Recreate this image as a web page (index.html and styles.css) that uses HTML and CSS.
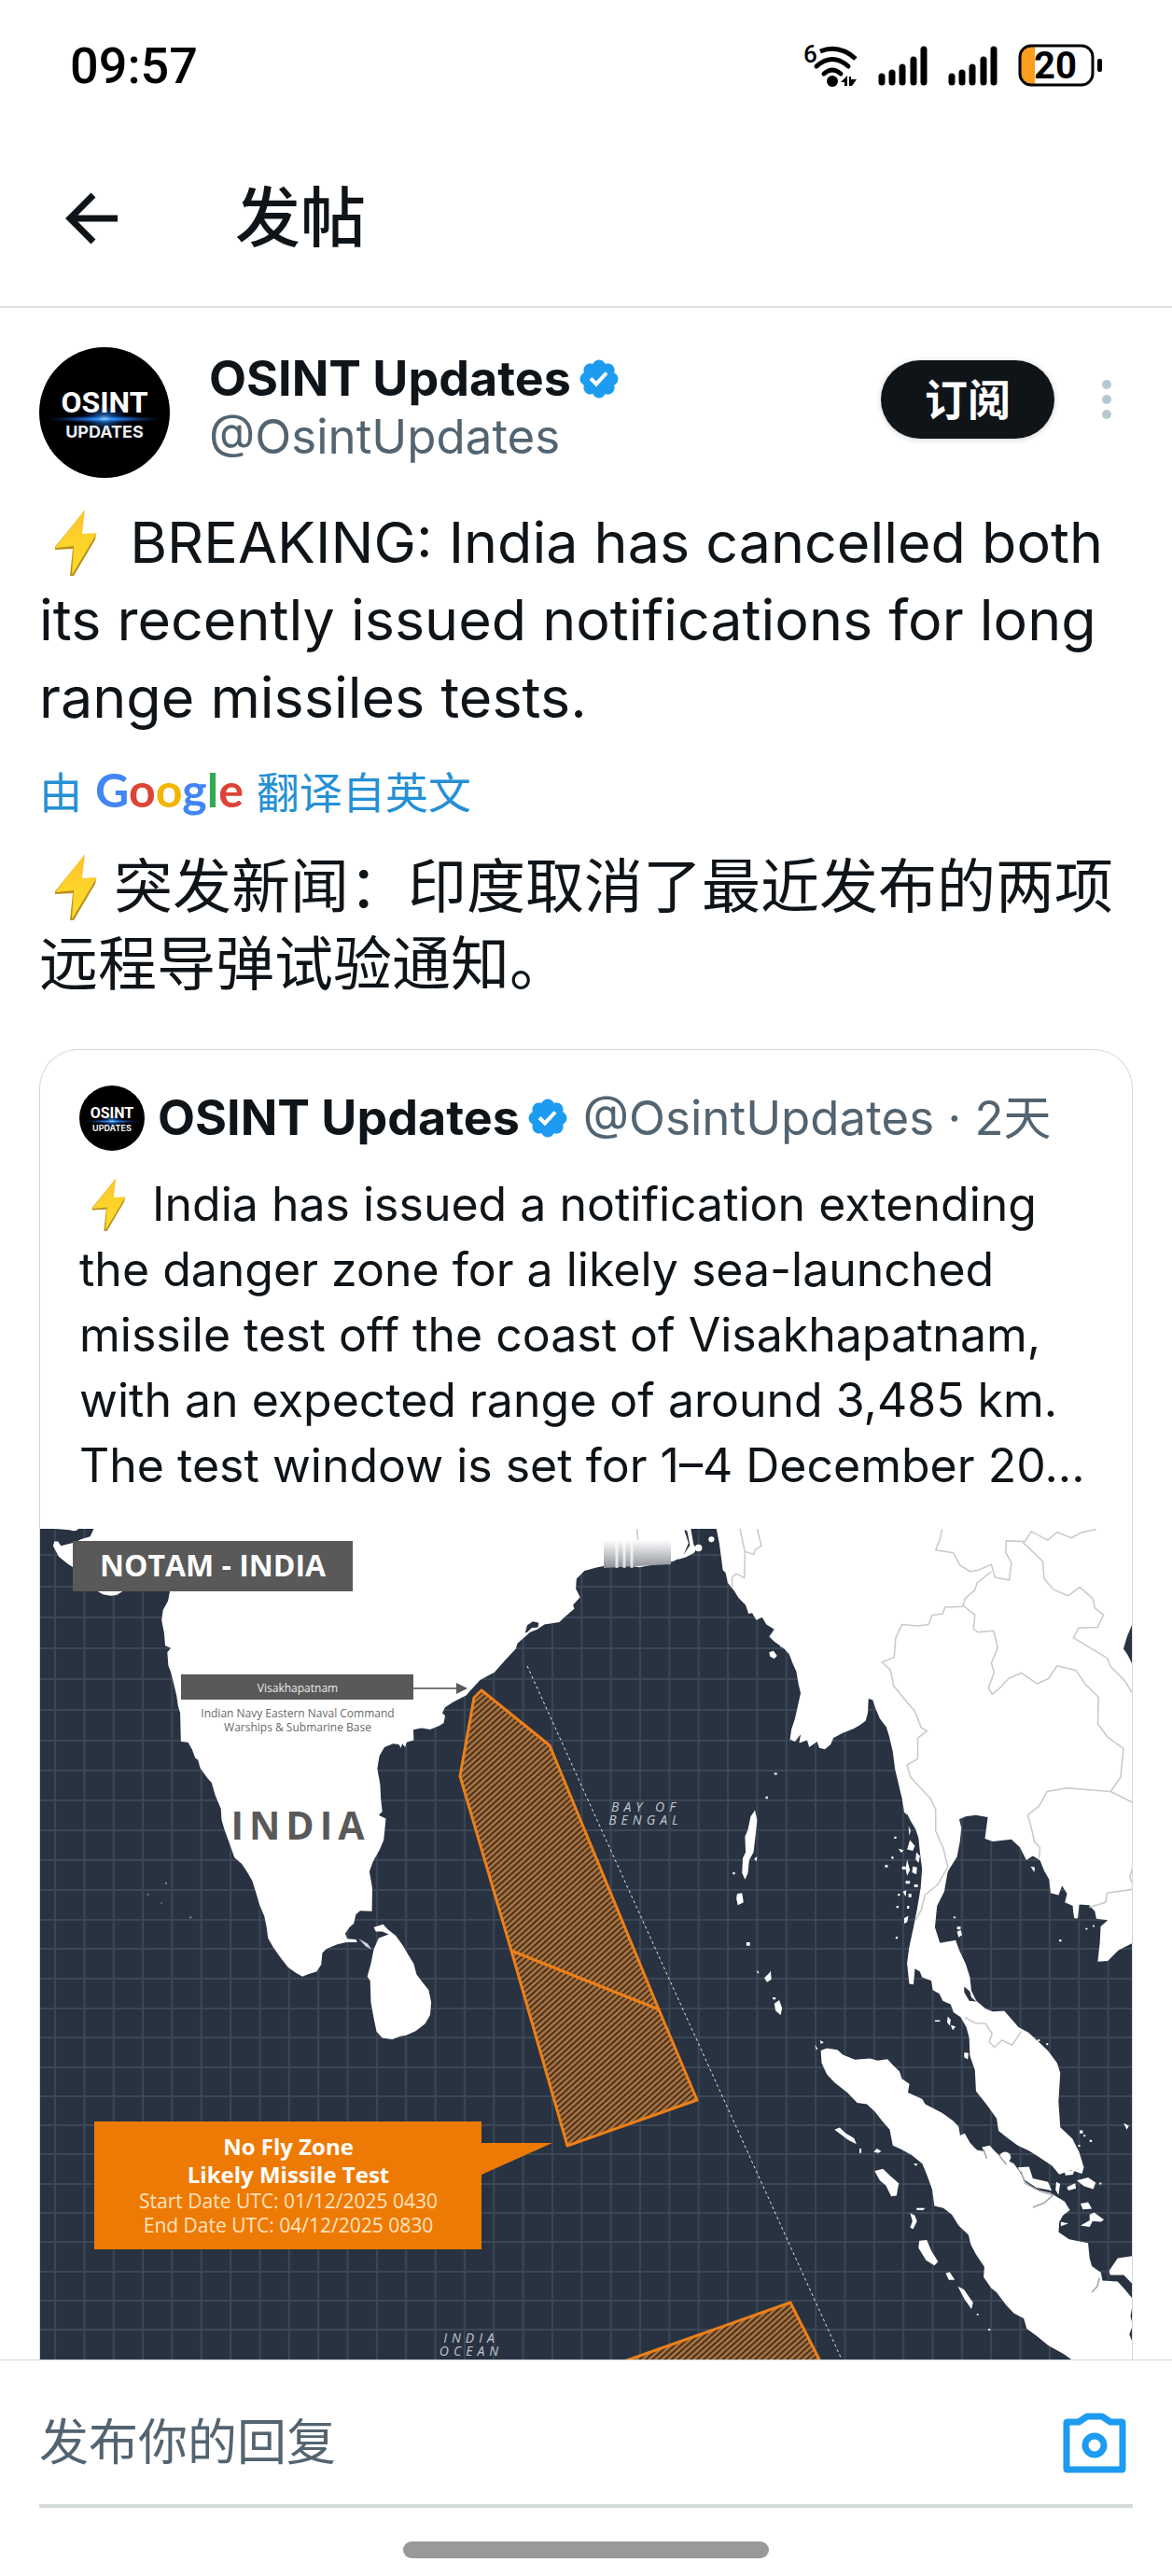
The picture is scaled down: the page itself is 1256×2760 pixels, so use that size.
FILE: index.html
```html
<!DOCTYPE html>
<html lang="zh-CN">
<head>
  <meta charset="UTF-8" />
  <meta name="viewport" content="width=device-width, initial-scale=1.0">
  <title>发帖</title>
  <link rel="stylesheet" href="styles.css">
</head>
<body>

  <!-- Shared symbols -->
  <svg class="symbols" aria-hidden="true">
    <defs>
      <radialGradient id="flare">
        <stop offset="0" stop-color="#9fe0ff" />
        <stop offset="0.25" stop-color="#2a86f0" />
        <stop offset="1" stop-color="#0a2a80" stop-opacity="0" />
      </radialGradient>
      <linearGradient id="boltFill" x1="0" y1="0" x2="0" y2="1">
        <stop offset="0" stop-color="#fdc030" />
        <stop offset="0.5" stop-color="#fdd32a" />
        <stop offset="1" stop-color="#fddc2c" />
      </linearGradient>
      <symbol id="avatar" viewBox="0 0 140 140">
        <circle cx="70" cy="70" r="70" fill="#000" />
        <ellipse cx="70" cy="77" rx="62" ry="4" fill="url(#flare)" />
        <ellipse cx="70" cy="76" rx="26" ry="16" fill="url(#flare)" opacity="0.6" />
        <text class="logo-top" x="70" y="70">OSINT</text>
        <text class="logo-sub" x="70" y="97">UPDATES</text>
      </symbol>
      <symbol id="verified" viewBox="0 0 22 22">
        <path fill="#1d9bf0" d="M20.396 11c-.018-.646-.215-1.275-.57-1.816-.354-.54-.852-.972-1.438-1.246.223-.607.27-1.264.14-1.897-.131-.634-.437-1.218-.882-1.687-.47-.445-1.053-.75-1.687-.882-.633-.13-1.29-.083-1.897.14-.273-.587-.704-1.086-1.245-1.44S11.647 1.62 11 1.604c-.646.017-1.273.213-1.813.568s-.969.854-1.24 1.44c-.608-.223-1.267-.272-1.902-.14-.635.13-1.22.436-1.69.882-.445.47-.749 1.055-.878 1.688-.13.633-.08 1.29.144 1.896-.587.274-1.087.705-1.443 1.245-.356.54-.555 1.17-.574 1.817.02.647.218 1.276.574 1.817.356.54.856.972 1.443 1.245-.224.606-.274 1.263-.144 1.896.13.634.433 1.218.877 1.688.47.443 1.054.747 1.687.878.633.132 1.29.084 1.897-.136.274.586.705 1.084 1.246 1.439.54.354 1.17.551 1.816.569.647-.016 1.276-.213 1.817-.567s.972-.854 1.245-1.44c.604.239 1.266.296 1.903.164.636-.132 1.22-.447 1.68-.907.46-.46.776-1.044.908-1.681s.075-1.299-.165-1.903c.586-.274 1.084-.705 1.439-1.246.354-.54.551-1.17.569-1.816z" />
        <path fill="#fff" d="M9.662 14.85l-3.429-3.428 1.293-1.302 2.072 2.072 4.4-4.794 1.347 1.246z" />
      </symbol>
      <symbol id="bolt" viewBox="0 0 80 72">
        <path fill="#b98f1c" d="M48 2 L40 28 L61 27 L60 32 L37 71 L33 71 L36 42 L17 43 L17 40 Z" />
        <path fill="url(#boltFill)" d="M49 0 L46 26 L62 25 L35 70 L37 39 L17 41 Z" />
      </symbol>
      <symbol id="signal" viewBox="0 0 53 43">
        <path stroke="#000" stroke-width="7" stroke-linecap="round" d="M4 33V39M15 29V39M26 23V39M38 15V39M49 4V39" />
      </symbol>
    </defs>
  </svg>

  <div class="status-bar">
    <time>09:57</time>
    <div class="status-icons">
      <svg class="wifi" width="58" height="48" viewBox="0 0 58 48">
        <text class="wifi-gen" x="0" y="21">6</text>
        <g fill="none" stroke="#000" stroke-width="5">
          <path d="M18 9Q38 1 56 17" />
          <path d="M14 25Q31 10 48 25" stroke-linecap="round" />
          <path d="M22 33Q31 25 40 33" stroke-linecap="round" />
        </g>
        <circle cx="31" cy="41" r="6" />
        <path d="M40 42L47 35V46H44V42ZM49 36H51V39H57L52 46H49Z" />
      </svg>
      <svg width="53" height="43"><use href="#signal" /></svg>
      <svg width="53" height="43"><use href="#signal" /></svg>
      <svg width="90" height="46" viewBox="0 0 90 46">
        <path fill="#fb9d1d" d="M14 2H18V44H14Q2 44 2 32V14Q2 2 14 2Z" />
        <rect x="2" y="2" width="78" height="42" rx="12" fill="none" stroke="#000" stroke-width="3" />
        <rect x="85" y="16" width="5" height="14" rx="2" />
        <text class="battery-level" x="40" y="37">20</text>
      </svg>
    </div>
  </div>

  <header class="top-nav">
    <button class="icon-btn" type="button" aria-label="返回">
      <svg width="56" height="56" viewBox="0 0 56 56" fill="none" stroke="#0f1419" stroke-width="7">
        <path d="M56 28H6M30 3L5 28L30 53" />
      </svg>
    </button>
    <h1>发帖</h1>
  </header>

  <main>
    <article class="post">
      <div class="author">
        <svg class="avatar"><use href="#avatar" /></svg>
        <div class="names">
          <div class="name-row">
            <strong>OSINT Updates</strong>
            <svg class="badge"><use href="#verified" /></svg>
          </div>
          <span class="handle">@OsintUpdates</span>
        </div>
        <button class="subscribe" type="button">订阅</button>
        <button class="icon-btn more" type="button" aria-label="更多">
          <svg width="12" height="44" viewBox="0 0 12 44" fill="#b9c8d0">
            <circle cx="6" cy="6" r="5" /><circle cx="6" cy="22" r="5" /><circle cx="6" cy="38" r="5" />
          </svg>
        </button>
      </div>

      <p class="post-text"><svg class="bolt"><use href="#bolt" /></svg> BREAKING: India has cancelled both its recently issued notifications for long range missiles tests.</p>

      <div class="translated-by">由
        <span class="google"><i class="b">G</i><i class="r">o</i><i class="y">o</i><i class="b">g</i><i class="g">l</i><i class="r">e</i></span>
        翻译自英文</div>

      <p class="post-text zh"><svg class="bolt"><use href="#bolt" /></svg>突发新闻：印度取消了最近发布的两项远程导弹试验通知。</p>

      <section class="quote">
        <div class="quote-author">
          <svg class="avatar small"><use href="#avatar" /></svg>
          <div class="name-row">
            <strong>OSINT Updates</strong>
            <svg class="badge"><use href="#verified" /></svg>
          </div>
          <span class="handle">@OsintUpdates · 2天</span>
        </div>
        <p class="quote-text"><svg class="bolt"><use href="#bolt" /></svg> India has issued a notification extending<br>the danger zone for a likely sea-launched<br>missile test off the coast of Visakhapatnam,<br>with an expected range of around 3,485 km.<br>The test window is set for 1–4 December 20...</p>

        <svg class="map" viewBox="0 0 1170 890">
          <defs>
            <pattern id="meridians" x="15" width="31.35" height="20" patternUnits="userSpaceOnUse">
              <rect width="2" height="20" fill="#3c4756" />
            </pattern>
            <pattern id="hatch" width="4.6" height="5" patternUnits="userSpaceOnUse" patternTransform="rotate(48)">
              <rect width="5" height="5" fill="#a87440" />
              <rect width="2" height="5" fill="#4a2f1c" />
            </pattern>
            <linearGradient id="smudge" x1="0" y1="0" x2="0" y2="1">
              <stop offset="0" stop-color="#fff" />
              <stop offset="1" stop-color="#8d9198" />
            </linearGradient>
          </defs>

          <!-- sea and graticule -->
          <rect width="1170" height="890" fill="#283241" />
          <rect width="1170" height="890" fill="url(#meridians)" />
          <path stroke="#3c4756" stroke-width="2" d="M0 28H1170M0 62H1170M0 95H1170M0 128H1170M0 161H1170M0 194H1170M0 227H1170M0 259H1170M0 291H1170M0 323H1170M0 355H1170M0 387H1170M0 419H1170M0 450H1170M0 482H1170M0 514H1170M0 545H1170M0 577H1170M0 608H1170M0 639H1170M0 670H1170M0 702H1170M0 733H1170M0 764H1170M0 796H1170M0 827H1170M0 858H1170" />

          <!-- India and Sri Lanka -->
          <g transform="translate(-3 -17) scale(0.3827)" fill="#fff">
            <path d="M158 44L148 66 122 74 105 82 66 92 58 80 48 80 44 92 60 122 84 142 100 152 130 190 170 220 184 228 204 232 222 230 240 219 300 190 371 220 366 246 352 272 348 300 355 336 358 372 374 378 364 390 367 428 374 446 380 470 390 512 394 540 400 560 402 640 422 642 434 664 442 686 450 692 456 714 476 742 488 755 498 790 514 828 516 860 525 890 540 930 552 965 572 982 588 1006 602 1030 612 1062 622 1096 636 1130 642 1160 646 1190 660 1215 680 1244 702 1272 722 1286 742 1298 762 1290 782 1284 795 1265 798 1232 810 1220 840 1208 866 1202 896 1202 892 1194 868 1192 862 1178 874 1160 886 1150 892 1124 904 1114 937 1115 938 1050 930 1004 940 976 958 944 970 916 976 856 956 846 966 836 962 800 960 760 952 716 958 680 972 656 996 646 1012 648 1018 658 1022 646 1030 656 1034 642 1054 636 1053 607 1076 602 1100 606 1126 596 1138 588 1142 568 1134 560 1142 544 1164 530 1202 510 1212 498 1240 468 1280 446 1310 412 1340 380 1344 366 1364 348 1380 334 1400 326 1420 312 1462 306 1474 294 1504 268 1500 258 1520 236 1508 212 1510 184 1532 162 1568 152 1596 147 1640 146 1686 152 1740 142 1780 136 1800 126 1824 110 1838 90 1830 44Z" />
            <path d="M46 44H115Q110 54 90 48Z" />
            <path fill="#283241" d="M1366 336L1372 314 1388 304 1404 308 1402 320 1384 322 1372 334Z" />
            <path d="M942 1160L968 1152 984 1168 1004 1184 1024 1212 1038 1236 1054 1262 1062 1292 1082 1318 1096 1336 1103 1370 1100 1406 1086 1430 1060 1450 1034 1462 1014 1466 994 1474 966 1470 950 1452 942 1414 934 1370 932 1310 924 1298 934 1262 942 1222 956 1190 984 1180 966 1172 948 1172Z" />
            <path d="M900 1192L925 1206 936 1222 920 1214Z" opacity="0.8" />
            <path d="M426 1130h6v5h-6zM358 1034h5v5h-5zM307 1066h5v5h-5zM346 1090h4v4h-4zM415 1722h8v7h-8z" opacity="0.4" />
          </g>

          <!-- Indochina and the Malay peninsula -->
          <g transform="translate(577 -17) scale(0.3827)" fill="#fff">
            <path d="M386 44L394 84 400 128 404 160 412 168 418 196 436 218 448 238 468 258 476 282 486 280 498 300 514 292 526 312 548 326 534 346 548 360 576 380 590 396 600 422 610 444 616 480 622 504 614 540 606 576 596 606 592 634 606 640 622 620 618 644 640 636 646 656 668 640 674 658 690 662 706 648 714 630 740 616 770 604 788 594 804 582 810 560 812 520 824 524 832 548 844 576 862 600 870 626 880 668 886 716 894 750 902 784 914 830 930 862 944 886 952 910 956 950 962 996 958 1050 948 1110 938 1160 926 1216 920 1260 926 1318 938 1320 942 1276 956 1284 962 1300 988 1310 992 1336 1010 1346 1020 1366 1042 1376 1050 1398 1070 1412 1086 1440 1094 1470 1096 1520 1110 1560 1113 1619 1145 1659 1171 1696 1176 1730 1204 1752 1230 1771 1262 1786 1288 1802 1326 1828 1346 1852 1380 1840 1410 1850 1415 1832 1402 1790 1383 1752 1349 1720 1344 1649 1349 1568 1340 1540 1314 1505 1290 1482 1260 1455 1232 1440 1210 1414 1192 1394 1160 1396 1140 1388 1114 1366 1100 1338 1096 1300 1084 1262 1066 1224 1056 1196 1012 1204 998 1160 1004 1100 1024 1060 1034 1004 1060 962 1068 920 1072 882 1066 858 1084 850 1112 846 1146 852 1138 912 1160 920 1212 914 1236 936 1254 972 1272 960 1292 972 1304 1002 1318 1026 1322 1064 1344 1070 1354 1044 1368 1066 1362 1090 1384 1100 1388 1132 1398 1134 1402 1096 1430 1098 1446 1116 1450 1136 1482 1140 1462 1158 1460 1200 1454 1256 1482 1254 1512 1224 1552 1204H1560V44Z" />
            <path d="M290 44H300L316 80 330 100 324 112 300 124 280 130 260 60Z" />
            <path fill="#283241" d="M1552 308L1536 346 1526 380 1538 398 1552 426ZM296 48L304 50 312 90 294 118 308 84Z" />
            <circle cx="372" cy="74" r="8" />
            <circle cx="336" cy="98" r="10" />
            <path d="M534 390L546 386 556 400 548 408 536 402ZM560 350L578 370 566 376Z" />
            <!-- Andaman and Nicobar islands -->
            <path d="M494 832L500 860 496 900 490 950 478 972 474 1010 466 1026 458 1008 460 966 468 950 466 906 474 888 482 850ZM444 1066L458 1064 462 1090 446 1098 442 1080ZM470 1202h10v10h-10zM498 1280l8 6-4 4zM520 1302l14-14 4-6 2 24-12 8zM548 1374L562 1364 570 1386 566 1406 552 1394ZM544 1356h8v6h-8zM548 728h8v5h-8zM524 794h6v6h-6zM432 1006h6v6h-6zM492 968l8-6-2 14z" />
            <!-- Mergui archipelago -->
            <path d="M906 800L914 812 920 846 912 838ZM924 876l6 14-4 14zM928 916l14 16-6 14-16-4zM896 940l14 4-6 8zM946 950l10 10-4 20-8-10zM920 970l8 30-8 16-4-20zM936 990l12 2-2 20-12-6zM906 990h10v8h-10zM884 906h6v6h-6zM876 962h6v6h-6zM858 986h8v6h-8zM916 1030h12v8h-12zM908 1060l10-4-2 18zM924 1066h8v10h-8zM894 1066h6v6h-6zM890 1100h6v6h-6zM912 1134l12-6-4 18-8 4zM888 1186h6v6h-6zM940 1040h10v8h-10zM920 1100h6v8h-6z" />
            <path d="M1060 1158h10v8h-10zM1060 1172l10-4 4 14-10 6zM1050 1130h6v5h-6zM998 1420h14v4h-14zM1034 1410l8 8-2 18-8-10zM1042 1434l14 4-8 10zM1080 1510l12 2-2 18-10-6zM1420 1162h5v5h-5zM1346 1194h6v6h-6zM1266 990l12 2-2 14zM1286 1474h6v5h-6zM1310 1484h5v6h-5zM1384 1104L1398 1106 1396 1136 1388 1134ZM1440 1154h5v5h-5z" />
            <path fill="#283241" d="M1080 1326L1096 1340 1100 1356 1114 1368 1094 1366 1080 1342Z" />
            <!-- borders -->
            <g fill="none" stroke="#c9c9cb" stroke-width="4" stroke-linejoin="round">
              <path d="M164 44L168 100M452 44L462 90 466 112 464 182 442 170 430 180 430 210M500 44L512 92 494 104 490 116 466 108" />
              <path d="M1018 44L1012 74 1000 104 1050 112 1068 146 1096 164 1120 160 1156 144 1166 180 1206 188 1212 140 1196 110 1198 78 1250 80 1268 52 1314 76 1340 54 1380 70 1410 54 1450 46" />
              <path d="M1156 164L1116 196 1110 216 1082 240 1076 262 1026 264 1020 282 990 286 980 312 950 316 906 312 888 350 884 404 850 418 874 440 882 484 920 530 942 556 960 602 976 610 950 630 950 688 920 706 930 740 986 800 1000 830 1000 890 1022 940 1034 992 1006 1040 970 1070 960 1110 944 1140" />
              <path d="M1076 258L1110 286 1106 324 1118 334 1162 330 1174 378 1156 420 1164 446 1148 490 1158 508 1180 490 1204 464 1240 448 1284 478 1316 464 1340 428 1392 440 1420 480 1456 516 1454 590 1480 626 1526 660 1518 740 1490 780 1366 770 1312 780 1290 820 1258 846 1270 890 1276 920 1292 936 1290 966" />
              <path d="M1244 82L1300 136 1304 184 1330 214 1370 232 1404 208 1440 240 1446 266 1470 286 1454 320 1400 322 1386 350 1480 406 1490 430 1530 470 1550 504M1490 780L1550 810M1430 1104L1476 1090 1480 1064 1550 1054M1550 996L1544 1020 1550 1036" />
              <path d="M1082 1412L1110 1428 1140 1430 1158 1458 1150 1480 1164 1496 1186 1476 1214 1490 1240 1452" />
            </g>
          </g>

          <!-- Sumatra and the islands around it -->
          <g transform="translate(577 513) scale(0.4057 0.3891)" fill="#fff">
            <path d="M640 118L656 112 684 116 698 130 730 143 770 140 790 146 816 142 832 160 848 176 854 196 874 210 870 234 908 252 916 266 960 290 990 312 1004 328 1008 352 1020 346 1034 372 1052 392 1070 396 1066 384 1086 380 1100 396 1114 410 1150 430 1164 450 1180 480 1206 500 1246 510 1284 534 1298 558 1280 572 1270 590 1268 618 1296 638 1346 648 1350 690 1356 712 1380 730 1384 752 1424 754 1440 772 1462 800V972H1306L1282 954 1240 930 1210 904 1184 884 1176 856 1150 842 1130 820 1104 784 1090 772 1070 742 1072 714 1050 680 1036 652 1030 626 1004 600 986 570 964 552 940 546 934 500 920 460 908 430 880 406 852 390 830 380 822 336 800 310 784 288 762 266 736 262 710 234 676 206 656 184 642 152Z" />
            <path d="M676 336L690 330 706 346 728 360 734 376 712 364ZM782 450L804 444 824 464 846 484 840 518 826 520 812 490 796 476ZM892 552L916 552 910 558 894 558ZM876 566L888 572 894 588 884 610 876 606 882 588ZM900 642L920 640 932 670 950 700 940 710 918 696 898 662ZM970 732L980 728 994 750 978 750ZM1002 768L1018 776 1042 812 1038 830 1020 804ZM780 398l8-10 12 8-8 4zM884 430l12 0-4 6zM624 102l8 12-4 2zM638 90l10 6-8 4zM742 388h5v12h-5z" />
            <circle cx="1127" cy="412" r="15" />
            <path d="M1160 440L1190 438 1200 470 1240 480 1250 504 1210 496 1180 476ZM1262 480l10 6-4 30-8-14zM1290 494l22-10 2 14-20 6zM1316 476l30-8 20 14-6 18-24-8zM1326 540l20-4 10 18-24 2zM1350 570l12-6 26 20-8 6-22-2-8 16-24-4 24-14zM1274 590l20 4-20 8zM1284 452l26-4-4 12-20 2zM1402 724L1424 690 1462 684V760L1440 736 1404 736ZM1324 338h8v8h-8zM1350 364h6v6h-6zM1440 318l14 8-6 10zM1320 378h5v5h-5zM1376 482h5v5h-5zM1334 350h5v5h-5zM1082 885h6v4h-6zM1052 843h5v4h-5z" />
            <path fill="none" stroke="#a5a8ad" stroke-width="4" d="M1168 450L1180 484 1220 506 1254 516 1230 538 1200 550M1376 744L1370 768 1356 784M1070 390L1078 416M1112 408L1130 432" />
            <path fill="#283241" d="M1462 825L1458 850 1462 866ZM1462 880L1455 900 1462 918Z" />
          </g>

          <path fill="url(#smudge)" d="M604 12H676V38L604 42Z" />
          <path stroke="#fff" stroke-width="3" d="M618 12V42M626 12V42M634 12V42" opacity="0.7" />

          <!-- closed area -->
          <g fill="url(#hatch)" stroke="#ee8018" stroke-width="3" stroke-linejoin="round">
            <path d="M473 173L465 181 450 265 505 452 565 661 704 612 663 515 546 232Z" />
            <path d="M505 452L663 515" />
            <path d="M620 894L804 829 837 894Z" />
          </g>
          <path fill="none" stroke="#e4e7ea" stroke-dasharray="3 3" d="M522 147L859 890" />

          <rect x="35" y="13" width="300" height="54" fill="#595959" />
          <text class="map-title" x="64" y="51">NOTAM - INDIA</text>

          <rect x="151" y="156" width="249" height="27" fill="#595959" />
          <text class="map-place" x="276" y="175">Visakhapatnam</text>
          <path stroke="#777" stroke-width="2" d="M400 171H448" />
          <path fill="#595959" d="M446 165L458 171L446 177Z" />
          <text class="map-note" x="276" y="202">Indian Navy Eastern Naval Command</text>
          <text class="map-note" x="276" y="217">Warships &amp; Submarine Base</text>
          <text class="map-country" x="279" y="333">INDIA</text>
          <text class="map-sea" x="649" y="303">BAY OF</text>
          <text class="map-sea" x="649" y="317">BENGAL</text>
          <text class="map-sea" x="462" y="872">INDIA</text>
          <text class="map-sea" x="462" y="886">OCEAN</text>

          <path fill="#ee7a06" d="M58 635H473V658H549L473 692V772H58Z" />
          <text class="zone bold" x="266" y="671">No Fly Zone</text>
          <text class="zone bold" x="266" y="701">Likely Missile Test</text>
          <text class="zone" x="266" y="728">Start Date UTC: 01/12/2025 0430</text>
          <text class="zone" x="266" y="754">End Date UTC: 04/12/2025 0830</text>
        </svg>
      </section>
    </article>
  </main>

  <footer class="reply-bar">
    <div class="reply-field">
      <input type="text" aria-label="发布你的回复" placeholder="发布你的回复">
      <button class="icon-btn" type="button" aria-label="相机">
        <svg width="74" height="66" viewBox="0 0 74 66" fill="none" stroke="#1d9bf0" stroke-width="7">
          <path stroke-linejoin="round" d="M8 11H20L29 5H45L54 11H66Q67 11 67 12V61Q67 62 66 62H8Q7 62 7 61V12Q7 11 8 11Z" />
          <circle cx="37" cy="36" r="10" />
        </svg>
      </button>
    </div>
    <div class="home-indicator"></div>
  </footer>

</body>
</html>
```
FILE: styles.css
```css
:root {
  --text: #0f1419;
  --muted: #536471;
  --line: #cfd9de;
  --blue: #2490d4;
  --side: 42px;
}

* { box-sizing: border-box; margin: 0; padding: 0; }

body {
  font-family: Inter, "Noto Sans CJK SC", sans-serif;
  font-size: 51px;
  color: var(--text);
  background: #fff;
  min-height: 100vh;
  display: flex;
  flex-direction: column;
}

.symbols { position: absolute; width: 0; height: 0; }

button, input { font: inherit; border: none; background: none; }
.icon-btn { display: flex; cursor: pointer; }

/* Status bar */
.status-bar {
  display: flex;
  align-items: center;
  justify-content: space-between;
  height: 140px;
  padding: 0 75px;
}
.status-bar time {
  font-family: Roboto, sans-serif;
  font-size: 54px;
  font-weight: 500;
  color: #000;
}
.status-icons { display: flex; align-items: center; gap: 22px; }
.status-icons svg { overflow: visible; }
.wifi-gen { font: 500 26px Roboto, sans-serif; }
.battery-level { font: 700 40px Roboto, sans-serif; text-anchor: middle; }

/* Title bar */
.top-nav {
  display: flex;
  align-items: center;
  gap: 126px;
  height: 190px;
  padding: 0 70px;
  border-bottom: 2px solid #dde1e4;
}
.top-nav h1 { font-size: 70px; font-weight: 500; line-height: 84px; }

/* Post */
main { flex: 1; }
.post { padding: 42px var(--side) 0; }
.author { display: flex; align-items: flex-start; gap: 42px; }
.avatar { width: 140px; height: 140px; flex: none; }
.avatar.small { width: 70px; height: 70px; }
.logo-top {
  font: 700 32px Roboto, sans-serif;
  fill: #fff;
  text-anchor: middle;
}
.logo-sub { font: 700 18px Inter, sans-serif; fill: #e8ecf2; text-anchor: middle; }
.names { flex: 1; min-width: 0; line-height: 62px; padding-top: 3px; }
.name-row { display: flex; align-items: center; gap: 6px; }
.name-row strong { font-size: 52px; }
.badge { width: 48px; height: 48px; flex: none; }
.handle { color: var(--muted); }
.subscribe {
  width: 186px;
  height: 84px;
  margin-top: 14px;
  border-radius: 42px;
  background: var(--text);
  color: #fff;
  font-size: 46px;
  font-weight: 700;
  line-height: 60px;
  box-shadow: 0 1px 6px rgba(0, 0, 0, 0.2);
}
.more { margin-top: 34px; padding: 0 22px 0 8px; }

.post-text { margin-top: 28px; font-size: 61px; line-height: 83px; }
.bolt { width: 80px; height: 72px; vertical-align: -15px; }
.post-text.zh { margin-top: 5px; font-size: 63px; }

.translated-by {
  display: flex;
  align-items: center;
  gap: 14px;
  height: 114px;
  font-size: 46px;
  color: var(--blue);
}
.google { font-family: Lato, sans-serif; font-size: 50px; font-weight: 700; }
.google i { font-style: normal; }
.google .b { color: #4285f4; }
.google .r { color: #db4437; }
.google .y { color: #f4b400; }
.google .g { color: #34a853; }

/* Quoted post */
.quote {
  margin-top: 50px;
  border: 1px solid var(--line);
  border-bottom: none;
  border-radius: 42px 42px 0 0;
}
.quote-author {
  display: flex;
  align-items: center;
  gap: 14px;
  padding: 38px var(--side) 0;
  line-height: 70px;
  height: 108px;
}
.quote-text {
  padding: 22px var(--side) 33px;
  font-size: 50px;
  line-height: 70px;
}
.quote-text .bolt { width: 64px; height: 58px; vertical-align: -12px; }

/* Map picture */
.map { display: block; width: 100%; height: auto; }
.map text { font-family: "Open Sans", sans-serif; text-anchor: middle; }
.map .map-title { font-size: 32px; font-weight: 700; fill: #fff; text-anchor: start; }
.map-place { font-size: 12px; fill: #eee; }
.map-note { font-size: 12px; fill: #6a6a6a; }
.map-country { font-size: 41px; font-weight: 700; letter-spacing: 6px; fill: #595959; }
.map-sea { font-size: 14px; font-style: italic; letter-spacing: 5px; fill: #c3c8ce; }
.zone { font-size: 21px; fill: #ffe3bd; }
.zone.bold { font-weight: 700; font-size: 24px; fill: #fff; }

/* Reply bar */
.reply-bar {
  position: sticky;
  bottom: 0;
  background: #fff;
  border-top: 1px solid var(--line);
  padding: 0 var(--side) 20px;
}
.reply-field {
  display: flex;
  align-items: center;
  height: 158px;
  padding: 22px 4px 0 0;
  border-bottom: 4px solid #d5dadd;
}
.reply-field input {
  flex: 1;
  min-width: 0;
  font-size: 53px;
  line-height: 80px;
  outline: none;
}
.reply-field input::placeholder { color: var(--muted); opacity: 1; }
.home-indicator {
  width: 392px;
  height: 18px;
  margin: 36px auto 0;
  border-radius: 9px;
  background: #999;
}
```
